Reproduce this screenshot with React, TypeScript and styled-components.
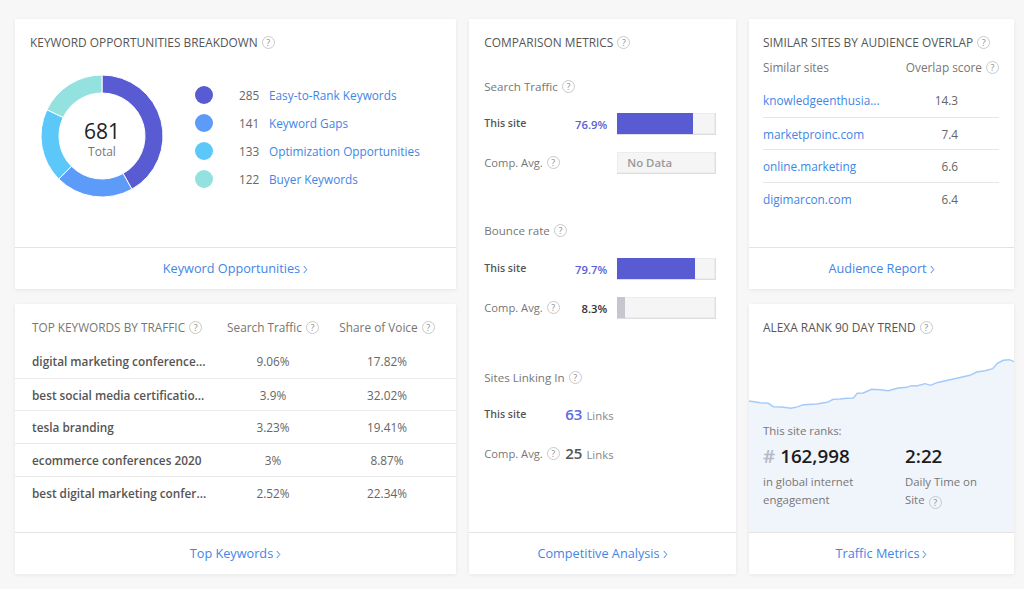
import React from "react";
import styled, { createGlobalStyle } from "styled-components";

const Global = createGlobalStyle`
  html, body { margin: 0; padding: 0; background: #f7f7f7; }
  body { font-family: "Open Sans", "Liberation Sans", sans-serif; color: #555; -webkit-font-smoothing: antialiased; }
  * { box-sizing: border-box; }
`;

const Page = styled.div`
  width: 1024px;
  height: 589px;
  overflow: hidden;
  padding: 19px 10px 15px 15px;
  display: grid;
  grid-template-columns: 441px 266.5px 265px;
  grid-template-rows: 270px 270px;
  column-gap: 13.25px;
  row-gap: 15px;
`;

const Card = styled.section<{ $col: number; $row: string }>`
  background: #fff;
  display: flex;
  flex-direction: column;
  box-shadow: 0 1px 4px rgba(0, 0, 0, 0.07);
  grid-column: ${(p) => p.$col};
  grid-row: ${(p) => p.$row};
  min-width: 0;
`;

const Body = styled.div`
  flex: 1;
  position: relative;
  min-height: 0;
  overflow: hidden;
`;

const Footer = styled.a`
  height: 42px;
  flex: none;
  border-top: 1px solid #e3e3e3;
  display: flex;
  align-items: center;
  justify-content: center;
  gap: 3px;
  color: #3f86e6;
  font-size: 12.7px;
  padding-bottom: 1px;
`;

const Chevron = styled.svg`
  width: 5px;
  height: 9px;
  margin-top: 2px;
`;

const Title = styled.h2`
  margin: 0;
  font-size: 11.9px;
  font-weight: 400;
  line-height: 16px;
  color: #555;
  display: flex;
  align-items: center;
  gap: 4px;
  white-space: nowrap;
`;

const HelpMark = styled.span`
  width: 13px;
  height: 13px;
  flex: none;
  display: inline-flex;
  align-items: center;
  justify-content: center;
  border: 1px solid #c9c9c9;
  border-radius: 50%;
  font-size: 9px;
  line-height: 1;
  color: #8d8d8d;
`;

const Help = () => <HelpMark>?</HelpMark>;

/* Keyword breakdown */
const BreakdownBody = styled(Body)`
  padding: 15px 15px 0;
`;
const BreakdownRow = styled.div`
  display: flex;
  margin: 25px 0 0 11px;
`;
const DonutWrap = styled.div`
  position: relative;
  width: 122px;
  height: 122px;
  flex: none;
`;
const DonutLabel = styled.div`
  position: absolute;
  inset: 0;
  padding-top: 6px;
  display: flex;
  flex-direction: column;
  align-items: center;
  justify-content: center;
`;
const DonutValue = styled.div`
  font-size: 21px;
  line-height: 24px;
  color: #222;
`;
const DonutCaption = styled.div`
  font-size: 12px;
  line-height: 16px;
  margin-top: 1px;
  color: #777;
`;
const Legend = styled.ul`
  list-style: none;
  margin: 6px 0 0 32px;
  padding: 0;
`;
const LegendItem = styled.li`
  height: 28.1px;
  display: flex;
  align-items: center;
  font-size: 11.8px;
`;
const Dot = styled.span<{ $color: string }>`
  width: 18px;
  height: 18px;
  border-radius: 50%;
  background: ${(p) => p.$color};
  flex: none;
`;
const LegendCount = styled.span`
  width: 30px;
  margin-left: 26px;
  color: #666;
`;
const BlueLink = styled.a`
  color: #3f86e6;
  white-space: nowrap;
`;

/* Top keywords */
const KeywordRow = styled.div<{ $head?: boolean }>`
  display: grid;
  grid-template-columns: 178px 126px 102px;
  align-items: center;
  padding: 0 18px 0 17px;
  height: ${(p) => (p.$head ? "26px" : "32.7px")};
  margin-bottom: ${(p) => (p.$head ? "5px" : "0")};
  margin-top: ${(p) => (p.$head ? "10px" : "0")};
  font-size: 11.8px;
  & + & + & { border-top: 1px solid #e9e9e9; }
`;
const KeywordTitle = styled(Title)`
  font-size: 11.8px;
  color: #767676;
`;
const HeadCell = styled.div`
  display: flex;
  align-items: center;
  justify-content: center;
  gap: 4px;
  color: #757575;
  white-space: nowrap;
`;
const KeywordName = styled.div`
  font-weight: 600;
  color: #555;
  white-space: nowrap;
`;
const Cell = styled.div`
  text-align: center;
  color: #666;
`;

/* Comparison */
const CompareBody = styled(Body)`
  padding: 15px 19px 0 15px;
`;
const CompareGroup = styled.div<{ $gap: number }>`
  margin-top: ${(p) => p.$gap}px;
`;
const GroupTitle = styled.div`
  display: flex;
  align-items: center;
  gap: 4px;
  height: 16px;
  font-size: 11.6px;
  color: #777;
`;
const MetricRow = styled.div<{ $top: number }>`
  display: flex;
  align-items: center;
  height: 22px;
  margin-top: ${(p) => p.$top}px;
  font-size: 11px;
`;
const MetricLabel = styled.div<{ $strong?: boolean }>`
  display: flex;
  align-items: center;
  gap: 4px;
  width: 76px;
  flex: none;
  font-weight: ${(p) => (p.$strong ? 600 : 400)};
  color: ${(p) => (p.$strong ? "#555" : "#777")};
  white-space: nowrap;
  font-size: ${(p) => (p.$strong ? "10.6px" : "11.2px")};
`;
const Percent = styled.div<{ $accent?: boolean }>`
  width: 47px;
  margin-top: 2px;
  text-align: right;
  font-weight: 600;
  font-size: 11.3px;
  color: ${(p) => (p.$accent ? "#5a5fd6" : "#333")};
  flex: none;
`;
const Track = styled.div`
  width: 99px;
  height: 22px;
  margin: 2px 0 0 10px;
  background: #f5f5f5;
  border: 1px solid #dedede;
  border-left: 0;
  border-top: 0;
  box-shadow: inset 0 0 0 1px #ececec;
  display: flex;
  align-items: center;
  flex: none;
`;
const Fill = styled.div<{ $color: string }>`
  height: 100%;
  background: ${(p) => p.$color};
`;
const NoData = styled(Track)`
  padding-left: 10px;
  margin-left: 57px;
  font-weight: 600;
  font-size: 11.4px;
  color: #999;
`;
const LinkValue = styled.div`
  display: flex;
  align-items: baseline;
  gap: 4px;
  margin-left: 5px;
  color: #888;
  font-size: 11.4px;
`;
const LinkNumber = styled.span<{ $accent?: boolean }>`
  font-size: 15px;
  font-weight: 600;
  color: ${(p) => (p.$accent ? "#5a6ce0" : "#555")};
`;

/* Similar sites */
const SimilarBody = styled(Body)`
  padding: 15px 15px 0 14px;
`;
const SimilarHead = styled.div`
  display: flex;
  justify-content: space-between;
  align-items: center;
  margin-top: 8px;
  height: 18px;
  font-size: 11.8px;
  color: #777;
`;
const HeadRight = styled.div`
  display: flex;
  align-items: center;
  gap: 4px;
`;
const SimilarList = styled.div`
  margin-top: 8px;
`;
const SimilarRow = styled.div`
  height: 32.7px;
  display: flex;
  align-items: center;
  justify-content: space-between;
  font-size: 11.8px;
  padding-right: 41px;
  & + & { border-top: 1px solid #e6e6e6; }
`;
const Score = styled.span`
  color: #666;
`;

/* Alexa */
const AlexaBody = styled(Body)`
  padding: 15px 14px 0;
`;
const Trend = styled.svg`
  position: absolute;
  left: 0;
  bottom: 0;
  width: 265px;
  height: 182px;
  display: block;
`;
const AlexaContent = styled.div`
  position: relative;
  margin-top: 87px;
`;
const RanksLabel = styled.div`
  font-size: 11.4px;
  line-height: 18px;
  color: #777;
`;
const StatGrid = styled.div`
  display: grid;
  grid-template-columns: 142px 1fr;
  margin-top: 3px;
`;
const StatValue = styled.div`
  font-size: 18.8px;
  line-height: 26px;
  font-weight: 600;
  color: #1c1c1c;
  display: flex;
  align-items: center;
  gap: 5px;
`;
const Hash = styled.span`
  color: #b6b9c6;
`;
const StatText = styled.div`
  font-size: 11.4px;
  line-height: 18px;
  color: #777;
  margin-top: 4px;
  width: 90px;
`;
const RankText = styled(StatText)`
  width: 110px;
`;
const InlineHelp = styled.span`
  display: inline-flex;
  vertical-align: -2px;
  margin-left: 4px;
`;

const segments = [
  { value: 285, color: "#585bd1" },
  { value: 141, color: "#5c9bf7" },
  { value: 133, color: "#5cc8fa" },
  { value: 122, color: "#93e2df" },
];
const labels = ["Easy-to-Rank Keywords", "Keyword Gaps", "Optimization Opportunities", "Buyer Keywords"];
const total = 681;

const polar = (a: number, r: number) => {
  const t = (a * Math.PI) / 180;
  return [61 + r * Math.sin(t), 61 - r * Math.cos(t)];
};

const arcPath = (from: number, to: number) => {
  const [x1, y1] = polar(from, 61);
  const [x2, y2] = polar(to, 61);
  const [x3, y3] = polar(to, 43);
  const [x4, y4] = polar(from, 43);
  const large = to - from > 180 ? 1 : 0;
  return `M${x1} ${y1}A61 61 0 ${large} 1 ${x2} ${y2}L${x3} ${y3}A43 43 0 ${large} 0 ${x4} ${y4}Z`;
};

const Donut = () => {
  let angle = 0;
  return (
    <svg width="122" height="122" viewBox="0 0 122 122">
      {segments.map((s) => {
        const from = angle;
        angle += (s.value / total) * 360;
        return <path key={s.color} d={arcPath(from, angle)} fill={s.color} stroke="#fff" strokeWidth="1" />;
      })}
    </svg>
  );
};

const trendZoom: [number, number][] = [
  [27, 303], [60, 308], [85, 310], [100, 320], [125, 321], [153, 325], [175, 320], [190, 314], [230, 312],
  [262, 307], [280, 298], [300, 297], [320, 295], [340, 294], [352, 280], [370, 279], [395, 268], [420, 269],
  [445, 272], [475, 264], [500, 262], [515, 257], [530, 258], [555, 251], [572, 256], [590, 248], [630, 239],
  [670, 230], [690, 226], [710, 216], [735, 212], [758, 206], [772, 190], [790, 181], [808, 179], [822, 185],
];
const trendLine = trendZoom.map(([x, y]) => `${((x - 27) / 3).toFixed(1)},${(y / 3 - 50).toFixed(1)}`).join(" ");

const More = ({ children }: { children: React.ReactNode }) => (
  <Footer>
    {children}
    <Chevron viewBox="0 0 5 9" fill="none" stroke="#3f86e6" strokeWidth="1">
      <path d="M.8 1l3 3.5-3 3.5" />
    </Chevron>
  </Footer>
);

const keywords = [
  ["digital marketing conference...", "9.06%", "17.82%"],
  ["best social media certificatio...", "3.9%", "32.02%"],
  ["tesla branding", "3.23%", "19.41%"],
  ["ecommerce conferences 2020", "3%", "8.87%"],
  ["best digital marketing confer...", "2.52%", "22.34%"],
];
const sites = [
  ["knowledgeenthusia...", "14.3"],
  ["marketproinc.com", "7.4"],
  ["online.marketing", "6.6"],
  ["digimarcon.com", "6.4"],
];

export default function App() {
  return (
    <>
      <Global />
      <Page>
        <Card $col={1} $row="1">
          <BreakdownBody>
            <Title>KEYWORD OPPORTUNITIES BREAKDOWN <Help /></Title>
            <BreakdownRow>
              <DonutWrap>
                <Donut />
                <DonutLabel>
                  <DonutValue>681</DonutValue>
                  <DonutCaption>Total</DonutCaption>
                </DonutLabel>
              </DonutWrap>
              <Legend>
                {segments.map((s, i) => (
                  <LegendItem key={s.color}>
                    <Dot $color={s.color} />
                    <LegendCount>{s.value}</LegendCount>
                    <BlueLink>{labels[i]}</BlueLink>
                  </LegendItem>
                ))}
              </Legend>
            </BreakdownRow>
          </BreakdownBody>
          <More>Keyword Opportunities</More>
        </Card>

        <Card $col={2} $row="1 / span 2">
          <CompareBody>
            <Title>COMPARISON METRICS <Help /></Title>
            <CompareGroup $gap={28}>
              <GroupTitle>Search Traffic <Help /></GroupTitle>
              <MetricRow $top={18}>
                <MetricLabel $strong>This site</MetricLabel>
                <Percent $accent>76.9%</Percent>
                <Track><Fill $color="#585bd1" style={{ width: "76.9%" }} /></Track>
              </MetricRow>
              <MetricRow $top={17}>
                <MetricLabel>Comp. Avg. <Help /></MetricLabel>
                <NoData>No Data</NoData>
              </MetricRow>
            </CompareGroup>
            <CompareGroup $gap={49}>
              <GroupTitle>Bounce rate <Help /></GroupTitle>
              <MetricRow $top={19}>
                <MetricLabel $strong>This site</MetricLabel>
                <Percent $accent>79.7%</Percent>
                <Track><Fill $color="#585bd1" style={{ width: "79.7%" }} /></Track>
              </MetricRow>
              <MetricRow $top={17}>
                <MetricLabel>Comp. Avg. <Help /></MetricLabel>
                <Percent>8.3%</Percent>
                <Track><Fill $color="#c6c6cf" style={{ width: "8.3%" }} /></Track>
              </MetricRow>
            </CompareGroup>
            <CompareGroup $gap={51}>
              <GroupTitle>Sites Linking In <Help /></GroupTitle>
              <MetricRow $top={18}>
                <MetricLabel $strong>This site</MetricLabel>
                <LinkValue><LinkNumber $accent>63</LinkNumber> Links</LinkValue>
              </MetricRow>
              <MetricRow $top={17}>
                <MetricLabel>Comp. Avg. <Help /></MetricLabel>
                <LinkValue><LinkNumber>25</LinkNumber> Links</LinkValue>
              </MetricRow>
            </CompareGroup>
          </CompareBody>
          <More>Competitive Analysis</More>
        </Card>

        <Card $col={3} $row="1">
          <SimilarBody>
            <Title>SIMILAR SITES BY AUDIENCE OVERLAP <Help /></Title>
            <SimilarHead>
              <span>Similar sites</span>
              <HeadRight>Overlap score <Help /></HeadRight>
            </SimilarHead>
            <SimilarList>
              {sites.map(([name, score]) => (
                <SimilarRow key={name}>
                  <BlueLink>{name}</BlueLink>
                  <Score>{score}</Score>
                </SimilarRow>
              ))}
            </SimilarList>
          </SimilarBody>
          <More>Audience Report</More>
        </Card>

        <Card $col={1} $row="2">
          <Body>
            <KeywordRow $head>
              <KeywordTitle>TOP KEYWORDS BY TRAFFIC <Help /></KeywordTitle>
              <HeadCell>Search Traffic <Help /></HeadCell>
              <HeadCell>Share of Voice <Help /></HeadCell>
            </KeywordRow>
            {keywords.map(([name, traffic, share]) => (
              <KeywordRow key={name}>
                <KeywordName>{name}</KeywordName>
                <Cell>{traffic}</Cell>
                <Cell>{share}</Cell>
              </KeywordRow>
            ))}
          </Body>
          <More>Top Keywords</More>
        </Card>

        <Card $col={3} $row="2">
          <AlexaBody>
            <Trend viewBox="0 0 265 182" preserveAspectRatio="none">
              <polygon points={`0,182 ${trendLine} 265,182`} fill="#f0f4fb" />
              <polyline points={trendLine} fill="none" stroke="#a3cbfa" strokeWidth="1.4" />
            </Trend>
            <Title>ALEXA RANK 90 DAY TREND <Help /></Title>
            <AlexaContent>
              <RanksLabel>This site ranks:</RanksLabel>
              <StatGrid>
                <div>
                  <StatValue><Hash>#</Hash> 162,998</StatValue>
                  <RankText>in global internet engagement</RankText>
                </div>
                <div>
                  <StatValue>2:22</StatValue>
                  <StatText>Daily Time on Site<InlineHelp><Help /></InlineHelp></StatText>
                </div>
              </StatGrid>
            </AlexaContent>
          </AlexaBody>
          <More>Traffic Metrics</More>
        </Card>
      </Page>
    </>
  );
}
